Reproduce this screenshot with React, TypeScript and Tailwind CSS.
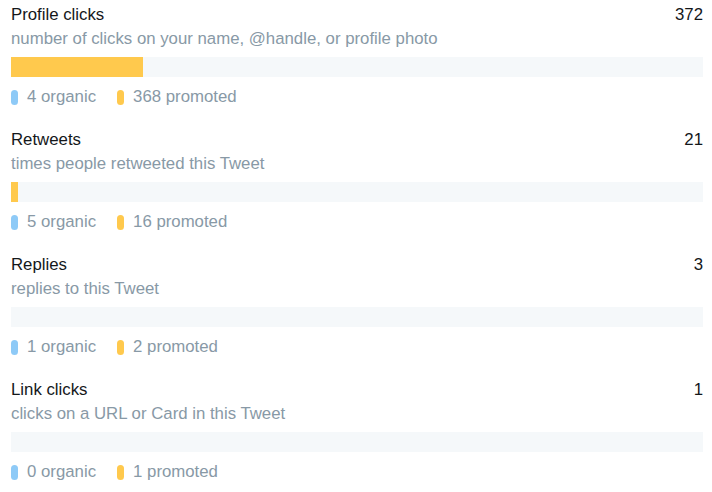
const rows = [
  { title: "Profile clicks", desc: "number of clicks on your name, @handle, or profile photo", total: "372", bar: 132, organic: 4, promoted: 368 },
  { title: "Retweets", desc: "times people retweeted this Tweet", total: "21", bar: 7, organic: 5, promoted: 16 },
  { title: "Replies", desc: "replies to this Tweet", total: "3", bar: 0, organic: 1, promoted: 2 },
  { title: "Link clicks", desc: "clicks on a URL or Card in this Tweet", total: "1", bar: 0, organic: 0, promoted: 1 },
];

function Legend({ color, label }: { color: string; label: string }) {
  return (
    <div className="flex items-center">
      <span className={`inline-block w-[7px] h-[15px] rounded-full ${color}`} />
      <span className="ml-[9px]">{label}</span>
    </div>
  );
}

export default function App() {
  return (
    <div
      className="w-[712px] h-[492px] bg-white pt-[5px] pl-[11px] pr-[9px] flex flex-col gap-[23px] text-[16.8px] leading-5"
      style={{ fontFamily: '"Liberation Sans", Arial, sans-serif' }}
    >
      {rows.map((r) => (
        <div key={r.title} className="flex flex-col">
          {/* header */}
          <div className="flex justify-between text-[#14171a]">
            <span>{r.title}</span>
            <span>{r.total}</span>
          </div>
          <div className="mt-1 text-[#8899a6]">{r.desc}</div>

          {/* bar */}
          <div className="mt-[8px] h-[20px] bg-[#f5f8fa] flex">
            <div className="h-full bg-[#ffc94d]" style={{ width: r.bar }} />
          </div>

          {/* legend */}
          <div className="mt-[10px] flex gap-[21px] text-[#8899a6]">
            <Legend color="bg-[#8ecaf7]" label={`${r.organic} organic`} />
            <Legend color="bg-[#ffc94d]" label={`${r.promoted} promoted`} />
          </div>
        </div>
      ))}
    </div>
  );
}
